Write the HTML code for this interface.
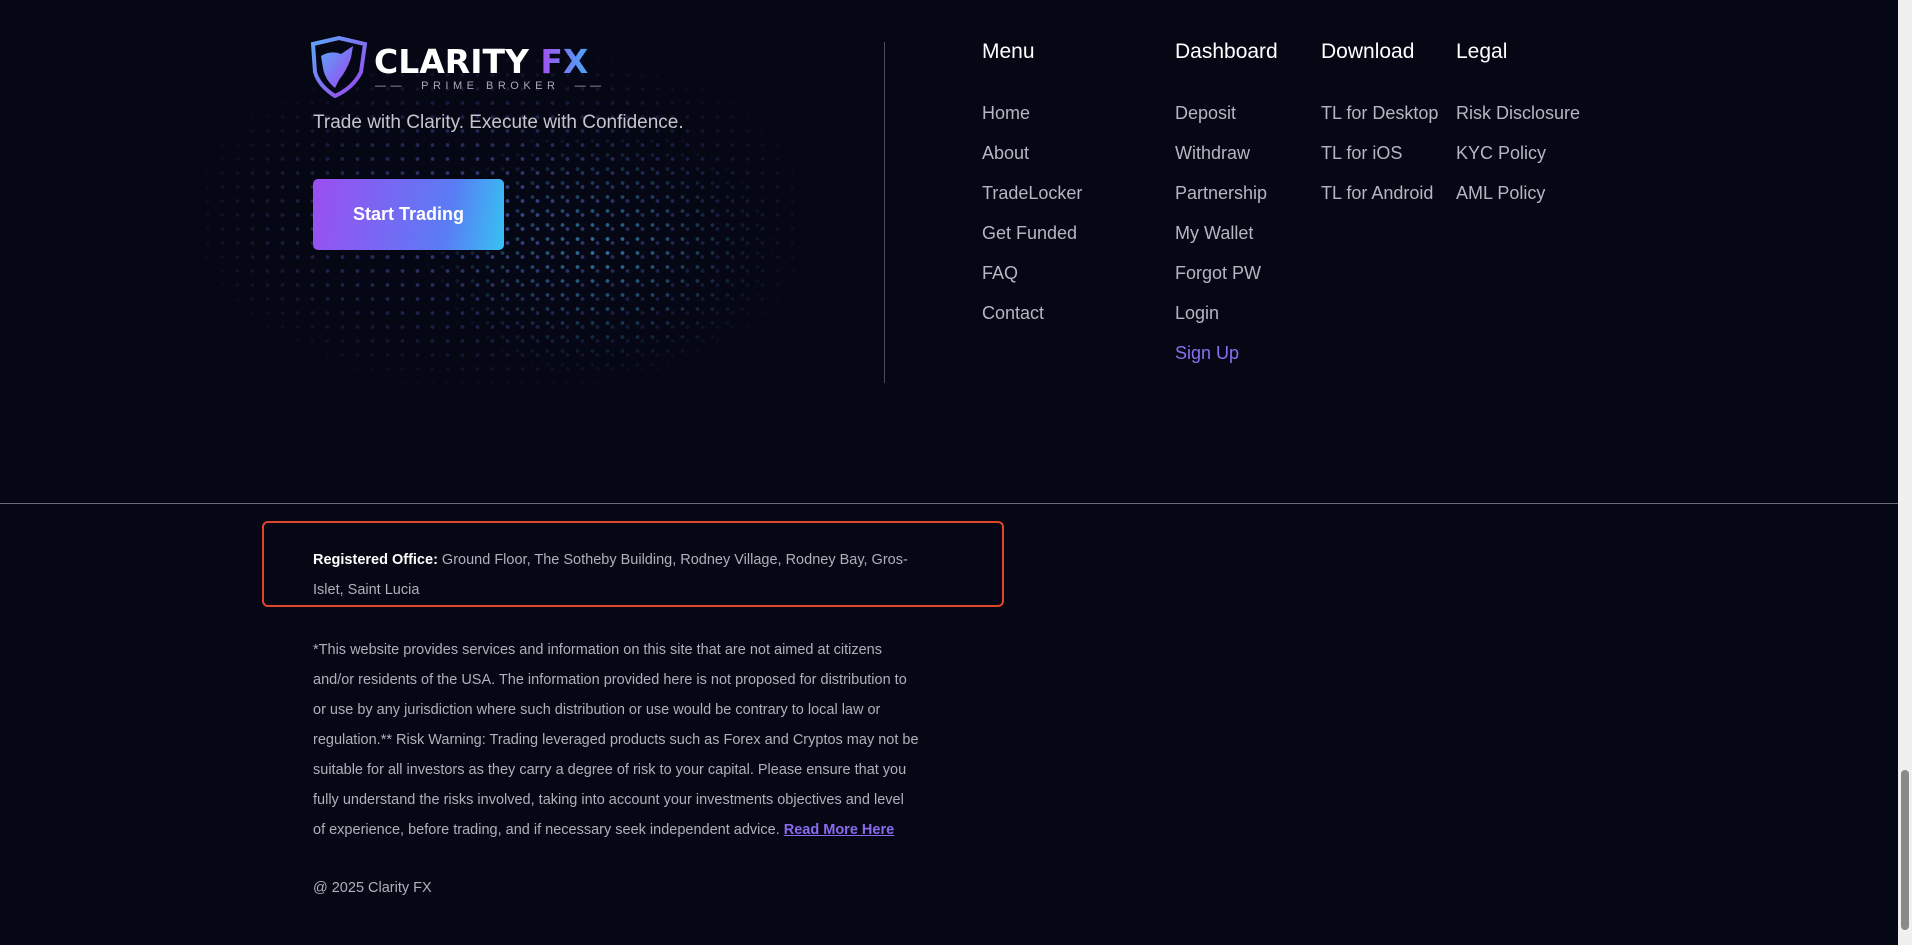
<!DOCTYPE html>
<html><head><meta charset="utf-8"><style>
*{margin:0;padding:0;box-sizing:border-box}
body{width:1912px;height:945px;background:#060714;font-family:"Liberation Sans",sans-serif;position:relative;overflow:hidden;color:#b9bac4}
.a{position:absolute;white-space:nowrap}
.dots{position:absolute;left:140px;top:40px;width:660px;height:360px;
background-image:radial-gradient(circle,#5a6fd8 1.6px,transparent 2.2px);background-size:15px 14px;
-webkit-mask-image:radial-gradient(ellipse 50% 50% at 55% 50%,rgba(0,0,0,.8),transparent 100%);opacity:.8}
.dots2{position:absolute;left:420px;top:120px;width:360px;height:260px;
background-image:radial-gradient(circle,#3fa8e0 1.6px,transparent 2.2px);background-size:15px 14px;
-webkit-mask-image:radial-gradient(ellipse 50% 50% at 50% 50%,rgba(0,0,0,.7),transparent 100%)}
.h{font-size:21px;color:#fff;top:40px}
.l{font-size:18px;color:#b4b6c2}
.btn{position:absolute;left:313px;top:179px;width:191px;height:71px;border-radius:5px;background:linear-gradient(100deg,#9b4ff0,#5a7cf5 70%,#36c2f2);color:#fff;font-weight:bold;font-size:18px;display:flex;align-items:center;justify-content:center}
.p{font-size:14.5px;color:#aeb0bb}
</style></head><body>
<div class="dots"></div><div class="dots2"></div>
<svg class="a" style="left:309px;top:36px" width="60" height="62" viewBox="0 0 60 62">
<defs><linearGradient id="g" x1="0" y1="0" x2="1" y2="1"><stop offset="0" stop-color="#5aa8f5"/><stop offset="1" stop-color="#a040f0"/></linearGradient></defs>
<path d="M4 8 L30 2 L56 8 L52 36 Q44 52 26 60 Q10 50 6 36 Z" fill="none" stroke="url(#g)" stroke-width="4"/>
<path d="M12 20 Q22 14 32 18 L44 10 L42 22 Q38 34 30 44 L26 52 Q16 44 14 32 Z" fill="url(#g)"/>
</svg>
<div class="a" style="left:374px;top:42px;font-size:33px;font-weight:900;color:#fff;font-family:'DejaVu Sans',sans-serif">CLARITY <span style="background:linear-gradient(90deg,#a34ff2,#4aa6f4);-webkit-background-clip:text;color:transparent">FX</span></div>
<div class="a" style="left:375px;top:80px;font-size:11px;letter-spacing:4.5px;color:#a8a9b8">——&nbsp; PRIME BROKER &nbsp;——</div>
<div class="a" style="left:313px;top:112px;font-size:19px;color:#c4c5ce">Trade with Clarity. Execute with Confidence.</div>
<div class="btn">Start Trading</div>
<div class="a" style="left:884px;top:42px;width:1px;height:341px;background:#4a4b58"></div>
<div class="a h" style="left:982px">Menu</div>
<div class="a h" style="left:1175px">Dashboard</div>
<div class="a h" style="left:1321px">Download</div>
<div class="a h" style="left:1456px">Legal</div>
<div class="a l" style="left:982px;top:93px;line-height:40px">Home<br>About<br>TradeLocker<br>Get Funded<br>FAQ<br>Contact</div>
<div class="a l" style="left:1175px;top:93px;line-height:40px">Deposit<br>Withdraw<br>Partnership<br>My Wallet<br>Forgot PW<br>Login<br><span style="color:#8a6ff0">Sign Up</span></div>
<div class="a l" style="left:1321px;top:93px;line-height:40px">TL for Desktop<br>TL for iOS<br>TL for Android</div>
<div class="a l" style="left:1456px;top:93px;line-height:40px">Risk Disclosure<br>KYC Policy<br>AML Policy</div>
<div class="a" style="left:0;top:503px;width:1898px;height:1px;background:#6a6b78"></div>
<div class="a" style="left:262px;top:521px;width:742px;height:86px;border:2px solid #e0452b;border-radius:6px"></div>
<div class="a p" style="left:313px;top:545px;line-height:30px"><b style="color:#fff">Registered Office:</b> Ground Floor, The Sotheby Building, Rodney Village, Rodney Bay, Gros-<br>Islet, Saint Lucia</div>
<div class="a p" style="left:313px;top:635px;line-height:30px">*This website provides services and information on this site that are not aimed at citizens<br>and/or residents of the USA. The information provided here is not proposed for distribution to<br>or use by any jurisdiction where such distribution or use would be contrary to local law or<br>regulation.** Risk Warning: Trading leveraged products such as Forex and Cryptos may not be<br>suitable for all investors as they carry a degree of risk to your capital. Please ensure that you<br>fully understand the risks involved, taking into account your investments objectives and level<br>of experience, before trading, and if necessary seek independent advice. <b style="color:#8a6af0;text-decoration:underline">Read More Here</b></div>
<div class="a p" style="left:313px;top:880px">@ 2025 Clarity FX</div>
<div class="a" style="left:1898px;top:0;width:14px;height:945px;background:#f0f0f0"></div>
<div class="a" style="left:1901px;top:770px;width:8px;height:160px;background:#8a8a8a;border-radius:4px"></div>
</body></html>
